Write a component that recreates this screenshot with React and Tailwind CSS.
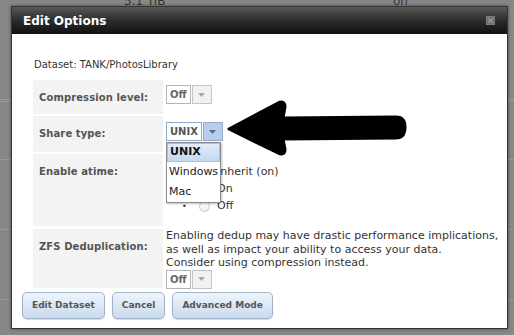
import React from 'react';

const font = "font-['DejaVu_Sans','Verdana',sans-serif]";

function Select({ value, open }) {
  return (
    <div className="relative flex gap-px">
      <div className={`h-[19px] px-[3px] flex items-center border text-[10px] font-bold ${open ? 'border-[#8fa9cf] text-[#555]' : 'border-[#b5b5b5] text-[#666]'} bg-white`}>
        {value}
      </div>
      <div className={`h-[19px] w-[20px] flex items-center justify-center border ${open ? 'border-[#8fa9cf] bg-[#b7cdea]' : 'border-[#c4c4c4] bg-[#f1f1f1]'}`}>
        <svg width="7" height="4" viewBox="0 0 7 4">
          <path d="M0 0 L7 0 L3.5 4 Z" fill={open ? '#4d6f9e' : '#a8a8a8'} />
        </svg>
      </div>
      {open && (
        <div className="absolute left-0 top-[20px] w-[55px] bg-white border border-[#8a8a8a] shadow-[1px_1px_2px_rgba(0,0,0,0.25)] z-10 text-[11px] text-[#222]">
          <div className="h-[19px] px-[2px] flex items-center font-bold bg-gradient-to-b from-[#e2ecf8] to-[#c4d8f1] border border-[#a9c1e0] text-[#111]">UNIX</div>
          <div className="h-[20px] px-[2px] flex items-center">Windows</div>
          <div className="h-[20px] px-[2px] flex items-center">Mac</div>
        </div>
      )}
    </div>
  );
}

function Row({ label, h, children, className = '' }) {
  return (
    <div className={`flex gap-[3px] ${h} ${className}`}>
      <div className="w-[130px] shrink-0 bg-[#f3f3f3] pl-[6px] pt-[10px] text-[10px] tracking-[0.1px] font-bold text-[#555]">{label}</div>
      <div className="flex-1">{children}</div>
    </div>
  );
}

function Radio({ label }) {
  return (
    <li className="h-[17px] flex items-center text-[11px] text-[#333]">
      <span className="w-[33px] pl-[16px] text-[8px]">•</span>
      <span className="w-[11px] h-[11px] rounded-full border border-[#c9c9c9] bg-gradient-to-b from-white to-[#eee] mr-[7px]" />
      {label}
    </li>
  );
}

function Button({ children }) {
  return (
    <button className="h-[27px] px-[9px] rounded-[5px] border border-[#9fb3c8] bg-gradient-to-b from-[#eef4fb] to-[#c9dbee] text-[9px] font-bold text-[#555] shadow-[0_1px_1px_rgba(0,0,0,0.15)]">
      {children}
    </button>
  );
}

export default function App() {
  return (
    <div className={`relative w-[514px] h-[335px] overflow-hidden bg-[#878787] ${font}`}>
      {/* page behind the dialog */}
      <div className="flex flex-col">
        <div className="h-[6px] relative">
          <span className="absolute left-[124px] top-[-8px] text-[12px] text-[#333]">5.1 TiB</span>
          <span className="absolute left-[393px] top-[-8px] text-[12px] text-[#333]">on</span>
        </div>
        <div className="h-[94px] border-b border-[#999]" />
        <div className="h-[2px] border-b border-[#999]" />
        <div className="h-[58px] border-b border-[#999]" />
        <div className="h-[70px] border-b border-[#999]" />
        <div className="h-[70px] border-b border-[#999]" />
      </div>

      {/* dialog */}
      <div className="absolute left-[11px] top-[6px] w-[497px] h-[323px] bg-white border border-[#333] shadow-[0_0_3px_rgba(0,0,0,0.5)] flex flex-col">
        <div className="h-[27px] shrink-0 bg-gradient-to-b from-[#5a5a5a] via-[#2c2c2c] to-[#111] flex items-center justify-between pl-[11px] pr-[12px]">
          <span className="text-[12px] font-bold text-white">Edit Options</span>
          <svg width="9" height="9" viewBox="0 0 9 9">
            <rect x="0.5" y="0.5" width="8" height="8" fill="#6a6a6a" stroke="#7d7d7d" />
            <path d="M2 2 L7 7 M7 2 L2 7" stroke="#9a9a9a" strokeWidth="1.3" />
          </svg>
        </div>

        <div className="flex-1 flex flex-col pt-[24px] pb-[9px]">
          <div className="pl-[21px] pr-[6px] flex flex-col">
            <div className="pl-[1px] text-[10px] leading-[13px] text-[#333]">Dataset: TANK/PhotosLibrary</div>

            <div className="mt-[9px] flex flex-col gap-[2px]">
              <Row label="Compression level:" h="h-[34px]">
                <div className="pt-[5px]"><Select value="Off" /></div>
              </Row>
              <Row label="Share type:" h="h-[36px]" className="relative z-10">
                <div className="pt-[6px]"><Select value="UNIX" open /></div>
              </Row>
              <Row label="Enable atime:" h="h-[72px]">
                <ul className="pt-[10px]">
                  <Radio label="Inherit (on)" />
                  <Radio label="On" />
                  <Radio label="Off" />
                </ul>
              </Row>
              <Row label="ZFS Deduplication:" h="h-[59px]" className="mt-[1px]">
                <p className="text-[11px] leading-[13.5px] text-[#333] whitespace-nowrap">
                  Enabling dedup may have drastic performance implications,<br />
                  as well as impact your ability to access your data.<br />
                  Consider using compression instead.
                </p>
                <Select value="Off" />
              </Row>
            </div>
          </div>

          <div className="mt-auto px-[10px] flex gap-[7px]">
            <Button>Edit Dataset</Button>
            <Button>Cancel</Button>
            <Button>Advanced Mode</Button>
          </div>
        </div>
      </div>

      {/* annotation arrow */}
      <svg className="absolute left-0 top-0" width="514" height="335" viewBox="0 0 514 335">
        <path
          d="M229 129 L278 103 Q285 100 285 107 L283 118 L396 117 Q405 117 405 127 Q405 138 396 138 L283 139 L285 149 Q285 156 278 153 Z"
          fill="#000"
          stroke="#000"
          strokeWidth="3"
          strokeLinejoin="round"
        />
      </svg>
    </div>
  );
}
